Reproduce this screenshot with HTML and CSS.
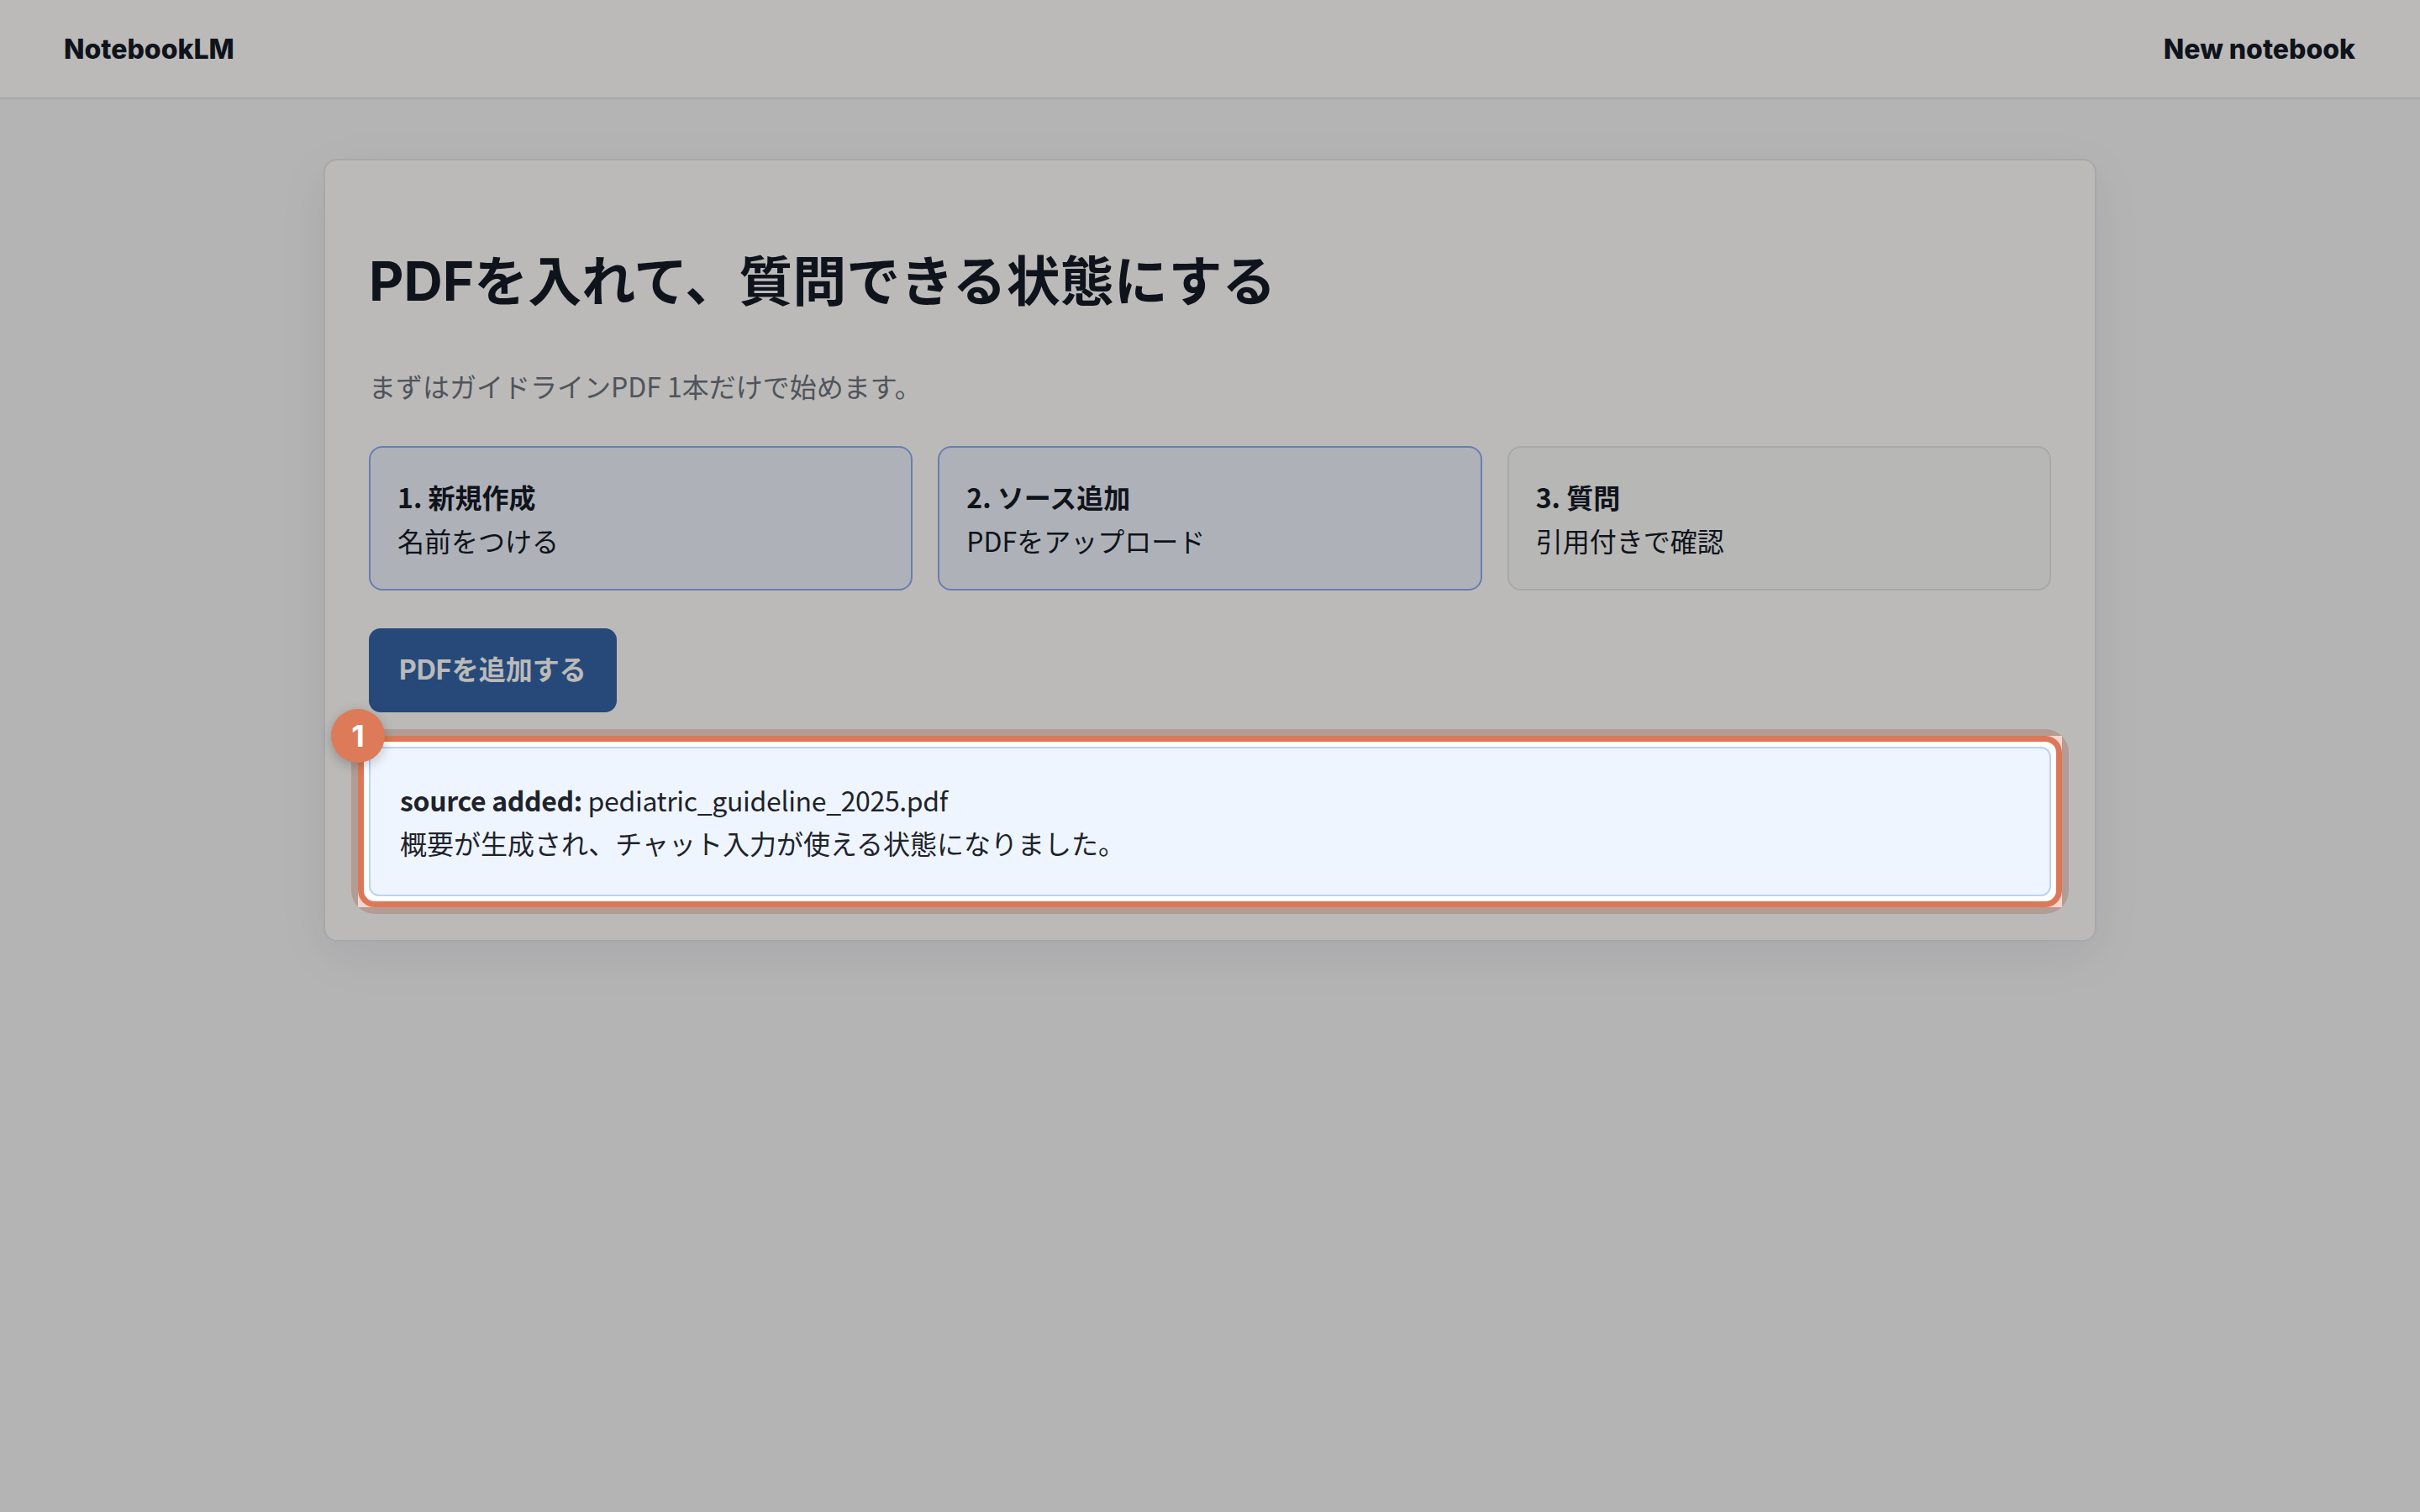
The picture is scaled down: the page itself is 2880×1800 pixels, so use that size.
FILE: index.html
```html
<!DOCTYPE html>
<html lang="ja">
<head>
  <meta charset="UTF-8">
  <title>NotebookLM - PDFを入れて、質問できる状態にする</title>
  <meta name="viewport" content="width=device-width, initial-scale=1">
  <link rel="stylesheet" href="styles.css">
</head>
<body>
  <header class="topbar">
    <div class="brand">NotebookLM</div>
    <button class="new-btn" type="button">New notebook</button>
  </header>

  <main class="card">
    <h1>PDFを入れて、質問できる状態にする</h1>
    <p class="lead">まずはガイドラインPDF 1本だけで始めます。</p>

    <ol class="steps">
      <li class="step done">
        <strong>1. 新規作成</strong>
        <span>名前をつける</span>
      </li>
      <li class="step done">
        <strong>2. ソース追加</strong>
        <span>PDFをアップロード</span>
      </li>
      <li class="step">
        <strong>3. 質問</strong>
        <span>引用付きで確認</span>
      </li>
    </ol>

    <button class="primary-btn" type="button">PDFを追加する</button>

    <div class="spot">
      <div class="status">
        <div class="src"><b>source added:</b> pediatric_guideline_2025.pdf</div>
        <div>概要が生成され、チャット入力が使える状態になりました。</div>
      </div>
      <div class="spot-ring"></div>
      <div class="spot-mask"></div>
      <div class="spot-badge">1</div>
    </div>
  </main>
</body>
</html>
```

FILE: styles.css
```css
:root {
  --ink: #111827;
  --muted: #6b7280;
  --line: #e3e6ec;
  --blue-bg: #eef4ff;
  --blue-line: #8aaef5;
  --accent: #dc7858;
  --dim: rgba(12, 8, 0, 0.28);
}
body {
  margin: 0;
  background: #f6f7fb;
  font-family: Inter, "Noto Sans CJK JP", sans-serif;
  color: var(--ink);
  min-height: 1800px;
}
.topbar {
  height: 116px;
  display: flex;
  align-items: center;
  justify-content: space-between;
  padding: 0 77px 0 76px;
  background: #fff;
  border-bottom: 2px solid #e5e7eb;
  font-size: 32px;
  font-weight: 800;
}
.new-btn {
  border: none;
  background: none;
  padding: 0;
  font: inherit;
  color: inherit;
}
.card {
  box-sizing: border-box;
  width: 2110px;
  margin: 71px auto 0;
  padding: 52px;
  background: #fff;
  border: 2px solid var(--line);
  border-radius: 16px;
  box-shadow: 0 16px 60px rgba(15, 23, 42, 0.07);
}
h1 {
  margin: 52px 0 0;
  font-size: 64px;
  line-height: 80px;
  font-weight: 700;
}
.lead {
  margin: 60px 0 0;
  font-family: "Noto Sans CJK JP", sans-serif;
  font-size: 32px;
  line-height: 48px;
  color: var(--muted);
}
.steps {
  list-style: none;
  margin: 48px 0 0;
  padding: 0;
  display: grid;
  grid-template-columns: repeat(3, 1fr);
  gap: 30px;
}
.step {
  display: flex;
  flex-direction: column;
  padding: 32px;
  border: 2px solid var(--line);
  border-radius: 16px;
  background: #fafbfd;
  font-family: "Noto Sans CJK JP", sans-serif;
  font-size: 32px;
  line-height: 52px;
}
.step.done {
  background: var(--blue-bg);
  border-color: var(--blue-line);
}
.primary-btn {
  display: block;
  margin-top: 45px;
  padding: 26px 36px;
  border: none;
  border-radius: 14px;
  background: #3163a8;
  color: #fff;
  font-family: Inter, "Noto Sans CJK JP", sans-serif;
  font-size: 32px;
  line-height: 48px;
  font-weight: 700;
}
.spot {
  position: relative;
  margin-top: 41px;
}
.status {
  padding: 36px 35px;
  background: #eef5ff;
  border: 2px solid #bcd1f5;
  border-radius: 12px;
  font-family: "Noto Sans CJK JP", sans-serif;
  font-size: 32px;
  line-height: 51px;
  color: #1e232b;
}
.status .src { letter-spacing: -0.35px; }
.status b { font-weight: 700; }
/* tutorial highlight: ring + dim everything outside it */
.spot-ring, .spot-mask {
  position: absolute;
  inset: -13px;
  pointer-events: none;
}
.spot-ring {
  border: 7px solid var(--accent);
  border-radius: 20px;
  box-shadow: 0 0 0 8px rgba(220, 120, 88, 0.3);
}
.spot-mask {
  box-shadow: 0 0 0 9999px var(--dim);
}
.spot-badge {
  position: absolute;
  left: -45px;
  top: -45px;
  width: 64px;
  height: 64px;
  border-radius: 50%;
  background: #dd7a58;
  color: #fff;
  display: flex;
  align-items: center;
  justify-content: center;
  font-size: 36px;
  font-weight: 700;
  box-shadow: 0 4px 14px rgba(0, 0, 0, 0.22);
}
```
